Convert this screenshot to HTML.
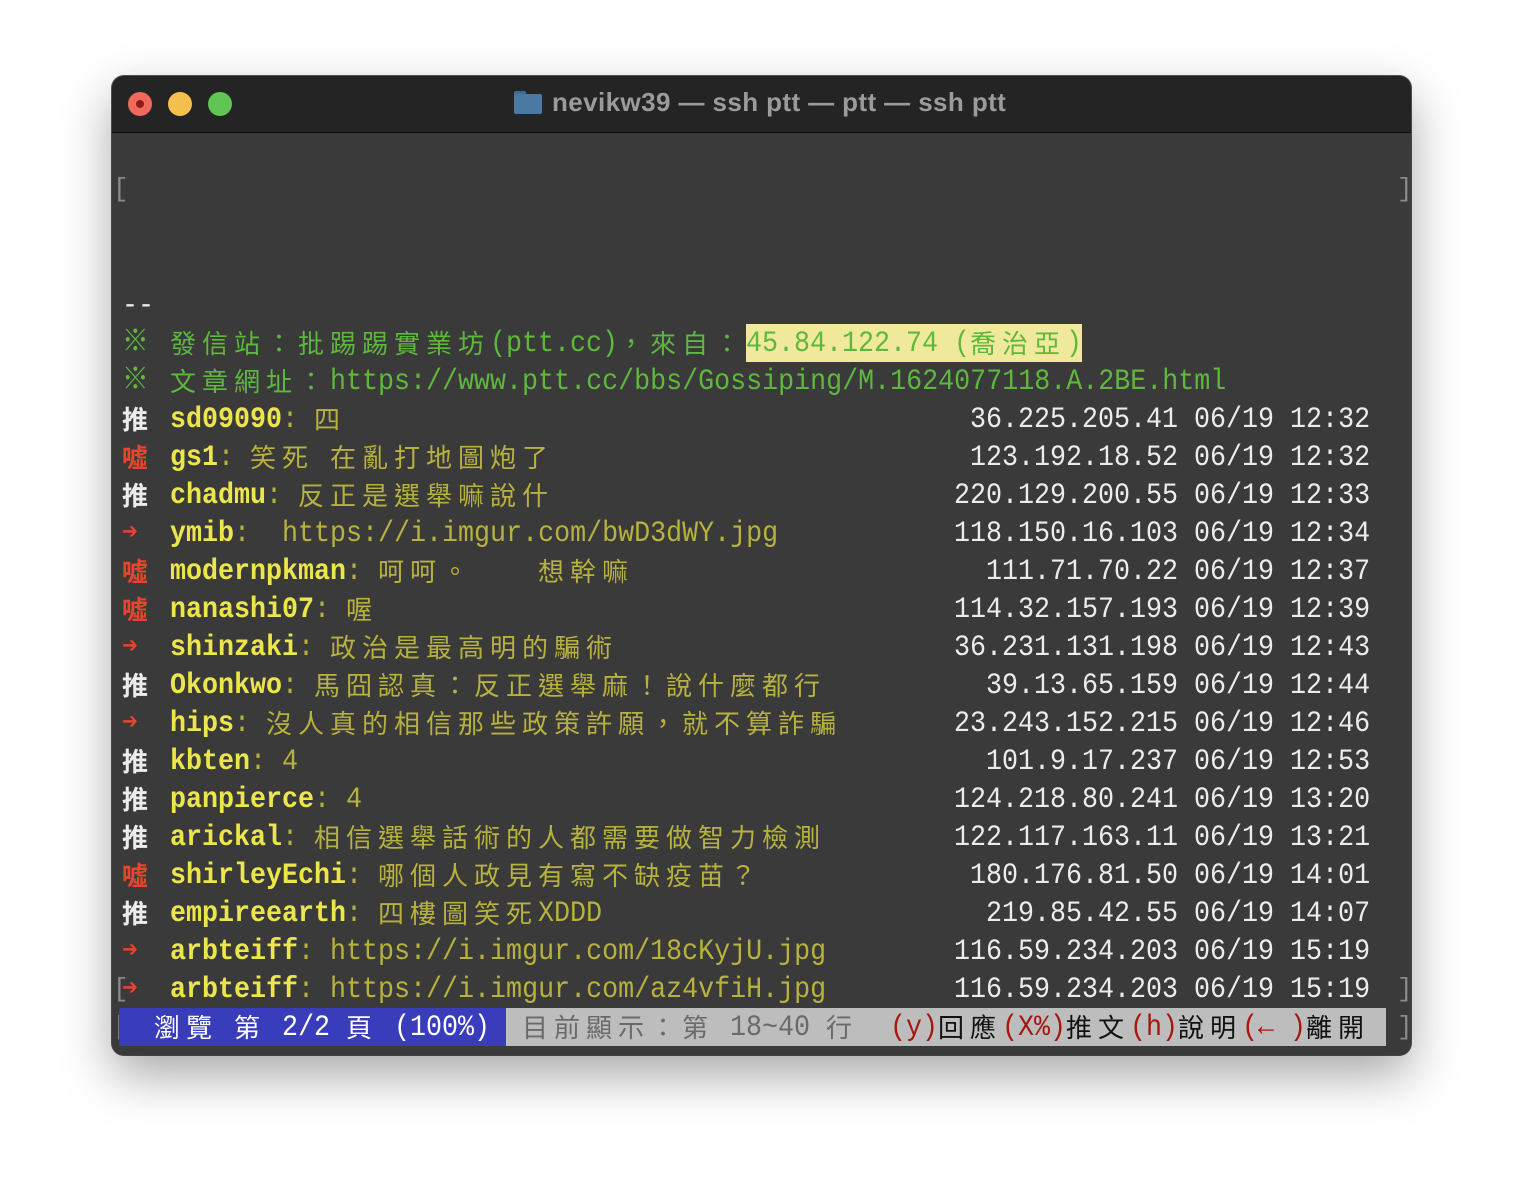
<!DOCTYPE html>
<html><head><meta charset="utf-8">
<style>
html,body{margin:0;padding:0;background:#fff;width:1524px;height:1204px;overflow:hidden}
.win{position:absolute;left:112px;top:76px;width:1299px;height:979px;border-radius:12px;background:#3a3a3a;box-shadow:0 20px 50px rgba(0,0,0,.35),0 0 0 1px #555;overflow:hidden}
.tb{position:absolute;left:0;top:0;width:100%;height:56px;background:#242424;border-bottom:1px solid #0e0e0e}
.dot{position:absolute;top:16px;width:24px;height:24px;border-radius:50%}
.title{position:absolute;left:440px;top:11px;font:bold 26px "Liberation Sans",sans-serif;letter-spacing:0.4px;color:#9b9b9b;white-space:nowrap}
.row{position:absolute;left:122px;height:38px;width:1300px}
.row span{position:absolute;top:1px;line-height:38px;white-space:pre;font-family:"Liberation Mono","Noto Sans CJK TC",monospace;font-size:30px;transform:scaleX(0.889);transform-origin:0 0}
.row span.c{font-family:"Noto Sans CJK TC",sans-serif;font-size:26px;letter-spacing:6px;transform:none;top:0}
.row span.bg{transform:none;top:0}
.g{color:#5db83c}.w{color:#ececec}.r{color:#e8442e}.y{color:#ece64a;font-weight:bold}.d{color:#b7b23e}
.t{font-weight:bold}
.row span.ip{left:auto;right:52px;color:#ececec;transform-origin:100% 0}
.br{position:absolute;color:#8a8a8a;font:26px "Liberation Mono",monospace;line-height:38px}
</style></head><body>
<div class="win">
 <div class="tb">
  <div class="dot" style="left:16px;background:#ee6a5f"><div style="position:absolute;left:8px;top:8px;width:8px;height:8px;border-radius:50%;background:#8e1d13"></div></div>
  <div class="dot" style="left:56px;background:#f5bf4f"></div>
  <div class="dot" style="left:96px;background:#61c554"></div>
  <div style="position:absolute;left:402px;top:15px;width:28px;height:23px">
   <div style="position:absolute;left:0;top:0;width:12px;height:5px;background:#3d6b92;border-radius:2px 2px 0 0"></div>
   <div style="position:absolute;left:0;top:3px;width:28px;height:20px;background:#4a7aa3;border-radius:2px"></div>
  </div>
  <div class="title">nevikw39 — ssh ptt — ptt — ssh ptt</div>
 </div>
</div>
<div style="position:absolute;left:0;top:0;width:1524px;height:1204px">
<div class="br" style="left:113px;top:170px">[</div>
<div class="br" style="left:1397px;top:170px">]</div>
<div class="br" style="left:113px;top:970px">[</div>
<div class="br" style="left:1397px;top:970px">]</div>
<div class="br" style="left:113px;top:1008px">[</div>
<div class="br" style="left:1397px;top:1008px">]</div>

<div class="row" style="top:286px"><span class="w" style="left:0">--</span></div>

<div class="row" style="top:324px"><span class="g" style="left:0">※</span><span class="c g" style="left:48px">發信站：批踢踢實業坊</span><span class="g" style="left:368px">(ptt.cc)</span><span class="c g" style="left:496px">，</span><span class="c g" style="left:528px">來自：</span><span class="bg" style="left:624px;width:336px;height:38px;background:#f0e99c"></span><span class="g" style="left:624px">45.84.122.74 (</span><span class="c g" style="left:848px">喬治亞</span><span class="g" style="left:944px">)</span></div>

<div class="row" style="top:362px"><span class="g" style="left:0">※</span><span class="c g" style="left:48px">文章網址：</span><span class="g" style="left:208px">https://www.ptt.cc/bbs/Gossiping/M.1624077118.A.2BE.html</span></div>

<div class="row" style="top:400px"><span class="c w t" style="left:0">推</span><span class="y" style="left:48px">sd09090</span><span class="d" style="left:160px">:</span><span class="c d" style="left:192px">四</span><span class="ip">36.225.205.41 06/19 12:32</span></div>
<div class="row" style="top:438px"><span class="c r t" style="left:0">噓</span><span class="y" style="left:48px">gs1</span><span class="d" style="left:96px">:</span><span class="c d" style="left:128px">笑死</span><span class="c d" style="left:208px">在亂打地圖炮了</span><span class="ip">123.192.18.52 06/19 12:32</span></div>
<div class="row" style="top:476px"><span class="c w t" style="left:0">推</span><span class="y" style="left:48px">chadmu</span><span class="d" style="left:144px">:</span><span class="c d" style="left:176px">反正是選舉嘛說什</span><span class="ip">220.129.200.55 06/19 12:33</span></div>
<div class="row" style="top:514px"><span class="r t" style="left:0">➔</span><span class="y" style="left:48px">ymib</span><span class="d" style="left:112px">:</span><span class="d" style="left:160px">https://i.imgur.com/bwD3dWY.jpg</span><span class="ip">118.150.16.103 06/19 12:34</span></div>
<div class="row" style="top:552px"><span class="c r t" style="left:0">噓</span><span class="y" style="left:48px">modernpkman</span><span class="d" style="left:224px">:</span><span class="c d" style="left:256px">呵呵。</span><span class="c d" style="left:416px">想幹嘛</span><span class="ip">111.71.70.22 06/19 12:37</span></div>
<div class="row" style="top:590px"><span class="c r t" style="left:0">噓</span><span class="y" style="left:48px">nanashi07</span><span class="d" style="left:192px">:</span><span class="c d" style="left:224px">喔</span><span class="ip">114.32.157.193 06/19 12:39</span></div>
<div class="row" style="top:628px"><span class="r t" style="left:0">➔</span><span class="y" style="left:48px">shinzaki</span><span class="d" style="left:176px">:</span><span class="c d" style="left:208px">政治是最高明的騙術</span><span class="ip">36.231.131.198 06/19 12:43</span></div>
<div class="row" style="top:666px"><span class="c w t" style="left:0">推</span><span class="y" style="left:48px">Okonkwo</span><span class="d" style="left:160px">:</span><span class="c d" style="left:192px">馬囧認真：反正選舉麻！說什麼都行</span><span class="ip">39.13.65.159 06/19 12:44</span></div>
<div class="row" style="top:704px"><span class="r t" style="left:0">➔</span><span class="y" style="left:48px">hips</span><span class="d" style="left:112px">:</span><span class="c d" style="left:144px">沒人真的相信那些政策許願，就不算詐騙</span><span class="ip">23.243.152.215 06/19 12:46</span></div>
<div class="row" style="top:742px"><span class="c w t" style="left:0">推</span><span class="y" style="left:48px">kbten</span><span class="d" style="left:128px">: 4</span><span class="ip">101.9.17.237 06/19 12:53</span></div>
<div class="row" style="top:780px"><span class="c w t" style="left:0">推</span><span class="y" style="left:48px">panpierce</span><span class="d" style="left:192px">: 4</span><span class="ip">124.218.80.241 06/19 13:20</span></div>
<div class="row" style="top:818px"><span class="c w t" style="left:0">推</span><span class="y" style="left:48px">arickal</span><span class="d" style="left:160px">:</span><span class="c d" style="left:192px">相信選舉話術的人都需要做智力檢測</span><span class="ip">122.117.163.11 06/19 13:21</span></div>
<div class="row" style="top:856px"><span class="c r t" style="left:0">噓</span><span class="y" style="left:48px">shirleyEchi</span><span class="d" style="left:224px">:</span><span class="c d" style="left:256px">哪個人政見有寫不缺疫苗？</span><span class="ip">180.176.81.50 06/19 14:01</span></div>
<div class="row" style="top:894px"><span class="c w t" style="left:0">推</span><span class="y" style="left:48px">empireearth</span><span class="d" style="left:224px">:</span><span class="c d" style="left:256px">四樓圖笑死</span><span class="d" style="left:416px">XDDD</span><span class="ip">219.85.42.55 06/19 14:07</span></div>
<div class="row" style="top:932px"><span class="r t" style="left:0">➔</span><span class="y" style="left:48px">arbteiff</span><span class="d" style="left:176px">: https://i.imgur.com/18cKyjU.jpg</span><span class="ip">116.59.234.203 06/19 15:19</span></div>
<div class="row" style="top:970px"><span class="r t" style="left:0">➔</span><span class="y" style="left:48px">arbteiff</span><span class="d" style="left:176px">: https://i.imgur.com/az4vfiH.jpg</span><span class="ip">116.59.234.203 06/19 15:19</span></div>

<div class="row" style="top:1008px">
 <span class="bg" style="left:-3px;width:387px;height:38px;background:#3a3dbb"></span>
 <span class="bg" style="left:384px;width:880px;height:38px;background:#bdbdbd"></span>
 <span class="c" style="left:32px;color:#fff">瀏覽</span><span class="c" style="left:112px;color:#fff">第</span><span style="left:160px;color:#fff">2/2</span><span class="c" style="left:224px;color:#fff">頁</span><span style="left:272px;color:#fff">(100%)</span>
 <span class="c" style="left:400px;color:#6a6a6a">目前顯示：第</span><span style="left:608px;color:#6a6a6a">18~40</span><span class="c" style="left:704px;color:#6a6a6a">行</span>
 <span style="left:768px;color:#a3170f">(y)</span><span class="c" style="left:816px;color:#111">回應</span>
 <span style="left:880px;color:#a3170f">(X%)</span><span class="c" style="left:944px;color:#111">推文</span>
 <span style="left:1008px;color:#a3170f">(h)</span><span class="c" style="left:1056px;color:#111">說明</span>
 <span style="left:1120px;color:#a3170f">(← )</span><span class="c" style="left:1184px;color:#111">離開</span>
</div>
</div>
</body></html>
